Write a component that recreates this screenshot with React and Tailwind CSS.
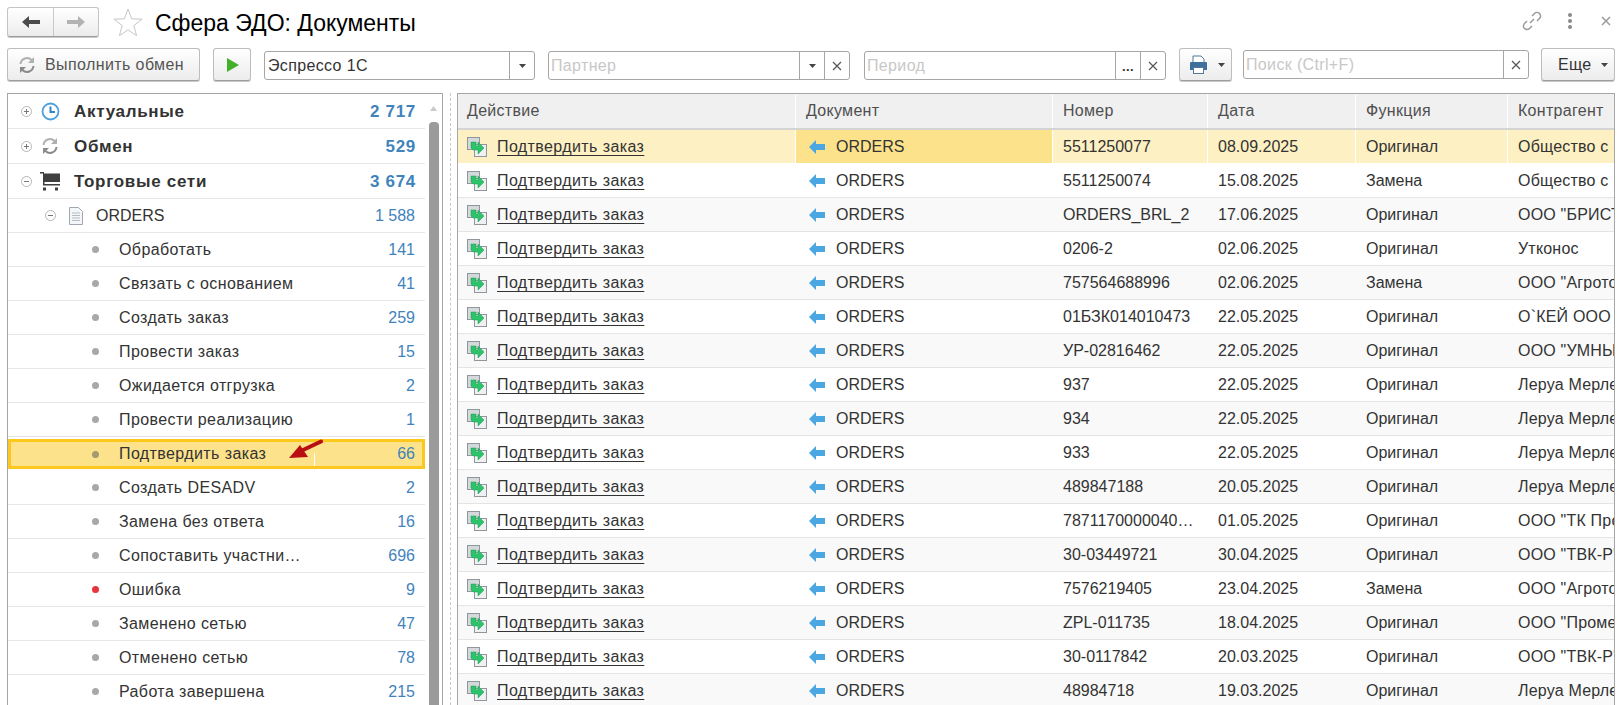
import React from "react";

const leftRows = [
  { label: "Обработать", count: "141" },
  { label: "Связать с основанием", count: "41" },
  { label: "Создать заказ", count: "259" },
  { label: "Провести заказ", count: "15" },
  { label: "Ожидается отгрузка", count: "2" },
  { label: "Провести реализацию", count: "1" },
  { label: "Подтвердить заказ", count: "66", active: true },
  { label: "Создать DESADV", count: "2" },
  { label: "Замена без ответа", count: "16" },
  { label: "Сопоставить участни…", count: "696" },
  { label: "Ошибка", count: "9", error: true },
  { label: "Заменено сетью", count: "47" },
  { label: "Отменено сетью", count: "78" },
  { label: "Работа завершена", count: "215" },
];

const docs = [
  ["5511250077", "08.09.2025", "Оригинал", "Общество с"],
  ["5511250074", "15.08.2025", "Замена", "Общество с"],
  ["ORDERS_BRL_2", "17.06.2025", "Оригинал", 'ООО "БРИСТ'],
  ["0206-2", "02.06.2025", "Оригинал", "Утконос"],
  ["757564688996", "02.06.2025", "Замена", 'ООО "Агрото'],
  ["01БЗК014010473", "22.05.2025", "Оригинал", "О`КЕЙ ООО"],
  ["УР-02816462", "22.05.2025", "Оригинал", 'ООО "УМНЫ'],
  ["937", "22.05.2025", "Оригинал", "Леруа Мерле"],
  ["934", "22.05.2025", "Оригинал", "Леруа Мерле"],
  ["933", "22.05.2025", "Оригинал", "Леруа Мерле"],
  ["489847188", "20.05.2025", "Оригинал", "Леруа Мерле"],
  ["7871170000040…", "01.05.2025", "Оригинал", 'ООО "ТК Про'],
  ["30-03449721", "30.04.2025", "Оригинал", 'ООО "ТВК-Р"'],
  ["7576219405", "23.04.2025", "Замена", 'ООО "Агрото'],
  ["ZPL-011735", "18.04.2025", "Оригинал", 'ООО "Промет'],
  ["30-0117842", "20.03.2025", "Оригинал", 'ООО "ТВК-Р"'],
  ["48984718", "19.03.2025", "Оригинал", "Леруа Мерле"],
];

const gridCols = "grid grid-cols-[338px_257px_155px_148px_152px_107px]";

function Caret({ className = "" }) {
  return (
    <svg width="7" height="4" viewBox="0 0 7 4" className={className}>
      <path d="M0 0h7L3.5 4z" fill="#444" />
    </svg>
  );
}

function Cross() {
  return (
    <svg width="10" height="10" viewBox="0 0 10 10">
      <path d="M1 1l8 8M9 1l-8 8" stroke="#555" strokeWidth="1.2" />
    </svg>
  );
}

function SyncIcon({ size = 18 }) {
  return (
    <svg width={size} height={size} viewBox="0 0 18 18" fill="none">
      <path d="M2.500 8a6.500 6.500 0 0 1 11-4l1 1" stroke="#b0b0b0" strokeWidth="2" />
      <path d="M16 1v6h-6z" fill="#b0b0b0" />
      <path d="M15.500 10a6.500 6.500 0 0 1-11 4l-1-1" stroke="#8a8a8a" strokeWidth="2" />
      <path d="M2 17v-6h6z" fill="#8a8a8a" />
    </svg>
  );
}

function ClockIcon() {
  return (
    <svg width="19" height="19" viewBox="0 0 19 19" fill="none">
      <circle cx="9.500" cy="9.500" r="8" stroke="#4a9fdc" strokeWidth="1.800" />
      <path d="M9.500 4.500v5.500h4.500" stroke="#2f86c8" strokeWidth="2" />
    </svg>
  );
}

function CartIcon() {
  return (
    <svg width="20" height="20" viewBox="0 0 20 20">
      <path d="M0 1h4v1.500h16v8.500H4.500v2H20v1.500H3V2.500H0z" fill="#3f3f3f" />
      <rect x="3" y="16.500" width="3" height="3" fill="#3f3f3f" />
      <rect x="15" y="16.500" width="3" height="3" fill="#3f3f3f" />
    </svg>
  );
}

function PageIcon() {
  return (
    <svg width="14" height="18" viewBox="0 0 14 18" fill="none">
      <path d="M.500.500h9l4 4v13H.500z" fill="#f4f6f8" stroke="#9fa8b0" />
      <path d="M3 6h8M3 8.500h8M3 11h8M3 13.500h8" stroke="#b5bcc2" />
    </svg>
  );
}

function ExpandIcon({ open }) {
  return (
    <svg width="11" height="11" viewBox="0 0 11 11" fill="none">
      <circle cx="5.500" cy="5.500" r="5" stroke="#b5b5b5" />
      <path d={open ? "M3 5.500h5" : "M3 5.500h5M5.500 3v5"} stroke="#777" />
    </svg>
  );
}

function ActionIcon() {
  return (
    <svg width="20" height="20" viewBox="0 0 20 20" fill="none">
      <rect x=".500" y=".500" width="12" height="12" fill="#d5d9dc" stroke="#8f979d" />
      <rect x="7.500" y="7.500" width="12" height="12" fill="#eef0f2" stroke="#8f979d" />
      <path d="M4 5h5v4h2V5l6 6-6 6v-4H6l-2-2z" fill="#2cc36b" stroke="#1c9a52" strokeWidth=".5" />
    </svg>
  );
}

function BlueArrow() {
  return (
    <svg width="16" height="14" viewBox="0 0 16 14">
      <path d="M0 7l7-7v4h9v6H7v4z" fill="#4aa7e2" />
    </svg>
  );
}

function ToolButton({ className = "", children }) {
  return (
    <div className={"h-[33px] shrink-0 flex items-center rounded-[3px] border border-[#bdbdbd] border-b-[#9d9d9d] bg-linear-to-b from-white to-[#ececec] shadow-[0_1px_0_#c9c9c9] " + className}>
      {children}
    </div>
  );
}

function Field({ className = "", value, placeholder, buttons = [] }) {
  return (
    <div className={"h-[29px] shrink-0 flex rounded-[3px] border border-[#a6a6a6] bg-white text-[16px] tracking-[0.35px] " + className}>
      <div className={"flex-1 leading-[28px] " + (placeholder ? "pl-[2px] text-[#c8c8c8]" : "pl-[3px] text-[#333]")}>
        {value || placeholder}
      </div>
      {buttons.map((b) => (
        <div key={b} className="w-[25px] flex items-center justify-center border-l border-[#a6a6a6]">
          {b === "caret" && <Caret />}
          {b === "cross" && <Cross />}
          {b === "dots" && <span className="mt-[2px] font-bold text-[13px] text-[#333] leading-[20px]">...</span>}
        </div>
      ))}
    </div>
  );
}

function TopRow({ icon, label, count, open, height }) {
  return (
    <div className={"flex items-center border-b border-[#e6e6e6] pl-[13px] pr-[9px] font-bold text-[17px] tracking-[0.7px] " + height}>
      <ExpandIcon open={open} />
      <div className="w-[20px] ml-[8px] flex justify-center">{icon}</div>
      <span className="ml-[14px] mt-[1px] flex-1 text-[#333]">{label}</span>
      <span className="mt-[1px] text-[#3f83bd]">{count}</span>
    </div>
  );
}

function LeftRow({ row }) {
  if (row.active) {
    return (
      <div className="relative h-[34px] flex items-center pr-[7px] pl-[84px] border-y-[2px] border-white">
        <div className="absolute inset-0 bg-[#fde28c] border-[3px] border-[#fdc81e]" />
        <div className="absolute left-[306px] bottom-[3px] h-[13px] w-px bg-white" />
        <span className="relative w-[7px] h-[7px] rounded-full bg-[#a39a70]" />
        <span className="relative ml-[20px] flex-1 text-[16px] tracking-[0.4px] text-[#333]">{row.label}</span>
        <span className="relative pr-[3px] text-[16px] text-[#3f83bd]">{row.count}</span>
        <svg className="absolute left-[281px] top-[0px]" width="35" height="22" viewBox="0 0 35 22">
          <path d="M32 2.500L14 11" stroke="#b90f12" strokeWidth="4" strokeLinecap="round" />
          <path d="M0 19l11-13 8 12z" fill="#b90f12" />
        </svg>
      </div>
    );
  }
  return (
    <div className="h-[34px] flex items-center pr-[10px] pl-[84px] border-b border-[#e6e6e6]">
      <span className={"w-[7px] h-[7px] rounded-full " + (row.error ? "bg-[#e8343c]" : "bg-[#a8a8a8]")} />
      <span className="ml-[20px] flex-1 text-[16px] tracking-[0.4px] text-[#333]">{row.label}</span>
      <span className="text-[16px] text-[#3f83bd]">{row.count}</span>
    </div>
  );
}

function DocRow({ doc, index }) {
  const selected = index === 0;
  const stripe = index % 2 === 0 ? "bg-[#f9f9f9]" : "bg-white";
  const cell = "flex items-center pl-[10px] overflow-hidden whitespace-nowrap " + (selected ? "border-r border-white" : "");
  return (
    <div className={gridCols + " h-[34px] text-[16px] text-[#333] border-b border-[#e4e4e4] " + (selected ? "bg-[#fdf0c2] border-white" : stripe)}>
      <div className={"flex items-center pl-[9px] whitespace-nowrap " + (selected ? "border-r border-white" : "")}>
        <ActionIcon />
        <span className="ml-[10px] tracking-[0.4px] underline underline-offset-[3px] [text-decoration-skip-ink:none]">Подтвердить заказ</span>
      </div>
      <div className={"flex items-center pl-[13px] whitespace-nowrap " + (selected ? "border-r border-white bg-[#fde28c]" : "")}>
        <BlueArrow />
        <span className="ml-[11px]">ORDERS</span>
      </div>
      <div className={cell}>{doc[0]}</div>
      <div className={cell}>{doc[1]}</div>
      <div className={cell}>{doc[2]}</div>
      <div className={cell + " tracking-[0.2px]"}>{doc[3]}</div>
    </div>
  );
}

export default function App() {
  return (
    <div className="w-[1624px] h-[705px] overflow-hidden bg-white font-['Liberation_Sans',Arial,sans-serif]">
      {/* title bar */}
      <div className="h-[48px] flex items-start pl-[7px] pr-[13px]">
        <div className="mt-[7px] w-[92px] h-[30px] flex rounded-[3px] border border-[#c4c4c4] border-b-[#9d9d9d] bg-linear-to-b from-white to-[#ececec] shadow-[0_1px_0_#c9c9c9]">
          <div className="w-[46px] flex items-center justify-center border-r border-[#c9c9c9]">
            <svg width="18" height="12" viewBox="0 0 18 12"><path d="M0 6l7-6v4h11v4H7v4z" fill="#4b4b4b" /></svg>
          </div>
          <div className="flex-1 flex items-center justify-center">
            <svg width="18" height="12" viewBox="0 0 18 12"><path d="M18 6l-7-6v4H0v4h11v4z" fill="#b3b3b3" /></svg>
          </div>
        </div>
        <svg className="mt-[8px] ml-[14px]" width="30" height="28" viewBox="0 0 30 28" fill="none">
          <path d="M15 1l3.600 9.800 10.400.400-8.200 6.500 2.800 10-8.600-5.800-8.600 5.800 2.800-10L1 11.200l10.400-.400z" stroke="#c6c6c6" />
        </svg>
        <h1 className="ml-[12px] mt-[8px] text-[23px] leading-[30px] text-black">Сфера ЭДО: Документы</h1>
        <div className="ml-auto mt-[10px] flex items-center">
          <svg width="22" height="22" viewBox="0 0 22 22" fill="none" stroke="#9a9a9a" strokeWidth="1.500">
            <path d="M9 13l4-4M11 6l2.500-2.500a3.500 3.500 0 0 1 5 5L16 11M11 16l-2.500 2.500a3.500 3.500 0 0 1-5-5L6 11" />
          </svg>
          <div className="ml-[25px] flex flex-col gap-[2px]">
            <span className="w-[4px] h-[4px] rounded-full bg-[#8a8a8a]" />
            <span className="w-[4px] h-[4px] rounded-full bg-[#8a8a8a]" />
            <span className="w-[4px] h-[4px] rounded-full bg-[#8a8a8a]" />
          </div>
          <svg className="ml-[29px]" width="10" height="10" viewBox="0 0 10 10"><path d="M1 1l8 8M9 1l-8 8" stroke="#999" strokeWidth="1.500" /></svg>
        </div>
      </div>

      {/* toolbar */}
      <div className="h-[45px] flex items-start pl-[7px]">
        <ToolButton className="w-[193px] pl-[10px]">
          <SyncIcon />
          <span className="ml-[9px] text-[16px] tracking-[0.4px] text-[#555]">Выполнить обмен</span>
        </ToolButton>
        <ToolButton className="w-[38px] ml-[13px] justify-center">
          <svg width="13" height="14" viewBox="0 0 13 14"><path d="M1 0l12 7-12 7z" fill="#43b02a" /></svg>
        </ToolButton>
        <Field className="w-[271px] ml-[13px] mt-[3px]" value="Эспрессо 1С" buttons={["caret"]} />
        <Field className="w-[302px] ml-[13px] mt-[3px]" placeholder="Партнер" buttons={["caret", "cross"]} />
        <Field className="w-[302px] ml-[14px] mt-[3px]" placeholder="Период" buttons={["dots", "cross"]} />
        <ToolButton className="w-[53px] ml-[13px] pl-[9px]">
          <svg width="19" height="20" viewBox="0 0 19 20">
            <path d="M4 1h8l3 3v4H4z" fill="#fff" stroke="#54769a" />
            <path d="M1 8a1 1 0 0 1 1-1h15a1 1 0 0 1 1 1v7h-3v-3H4v3H1z" fill="#3f6f9c" />
            <rect x="4.500" y="12.500" width="10" height="6" fill="#fff" stroke="#54769a" />
          </svg>
          <Caret className="ml-[10px]" />
        </ToolButton>
        <Field className="w-[286px] ml-[11px] mt-[2px]" placeholder="Поиск (Ctrl+F)" buttons={["cross"]} />
        <ToolButton className="w-[74px] ml-[12px] pl-[16px]">
          <span className="text-[16px] tracking-[0.3px] text-[#333]">Еще</span>
          <Caret className="ml-[10px]" />
        </ToolButton>
      </div>

      {/* main */}
      <div className="flex pl-[7px] h-[612px]">
        <div className="w-[436px] shrink-0 flex border border-b-0 border-[#a6a6a6]">
          <div className="w-[417px]">
            <TopRow height="h-[35px]" icon={<ClockIcon />} label="Актуальные" count="2 717" />
            <TopRow height="h-[35px]" icon={<SyncIcon />} label="Обмен" count="529" />
            <TopRow height="h-[35px]" icon={<CartIcon />} label="Торговые сети" count="3 674" open />
            <div className="h-[34px] flex items-center pl-[37px] pr-[10px] border-b border-[#e6e6e6]">
              <ExpandIcon open />
              <div className="ml-[13px]"><PageIcon /></div>
              <span className="ml-[13px] flex-1 text-[16px] text-[#333]">ORDERS</span>
              <span className="text-[16px] text-[#3f83bd]">1 588</span>
            </div>
            {leftRows.map((row) => (
              <LeftRow key={row.label} row={row} />
            ))}
          </div>
          <div className="w-[17px] flex flex-col items-center pt-[12px]">
            <svg width="7" height="5" viewBox="0 0 7 5"><path d="M3.500 0L7 5H0z" fill="#c9c9c9" /></svg>
            <div className="mt-[11px] w-[10px] flex-1 rounded-t-[4px] bg-[#9b9b9b]" />
          </div>
        </div>

        <div className="w-[14px] shrink-0 flex justify-center">
          <div className="h-full border-l border-dashed border-[#c9c9c9]" />
        </div>

        <div className="w-[1158px] shrink-0 border border-b-0 border-[#a6a6a6] overflow-hidden">
          <div className={gridCols + " h-[36px] text-[16px] tracking-[0.3px] text-[#4f4f4f] bg-[#f0f0f0] border-b-2 border-[#d4d4d4]"}>
            <div className="flex items-center pl-[9px] border-r border-white">Действие</div>
            {["Документ", "Номер", "Дата", "Функция", "Контрагент"].map((title) => (
              <div key={title} className="flex items-center pl-[10px] border-r border-white">
                {title}
              </div>
            ))}
          </div>
          {docs.map((doc, i) => (
            <DocRow key={doc[0]} doc={doc} index={i} />
          ))}
        </div>
      </div>
    </div>
  );
}
